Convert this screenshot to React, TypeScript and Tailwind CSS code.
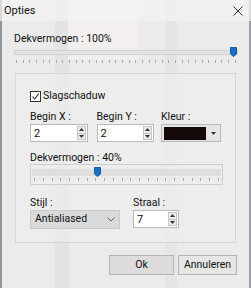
import React from "react";

function Spin() {
  return (
    <div className="flex flex-col w-[9px] h-[14px] border border-[#c4c4c4] bg-[#ececec]">
      <div className="flex-1 flex items-center justify-center border-b border-[#c4c4c4]">
        <svg width="5" height="3" viewBox="0 0 5 3" className="block"><path d="M0 3 L2.5 0 L5 3Z" fill="#333" /></svg>
      </div>
      <div className="flex-1 flex items-center justify-center">
        <svg width="5" height="3" viewBox="0 0 5 3" className="block"><path d="M0 0 L2.5 3 L5 0Z" fill="#333" /></svg>
      </div>
    </div>
  );
}

function NumInput({ value, w }: { value: string; w: string }) {
  return (
    <div className={`${w} h-[18px] flex items-center justify-between border border-[#b9b9b9] bg-white pl-[3px] pr-[1px]`}>
      <span className="text-[11px] leading-none text-[#111]">{value}</span>
      <Spin />
    </div>
  );
}

function Ticks({ n }: { n: number }) {
  return (
    <div className="flex justify-between px-[2px]">
      {Array.from({ length: n }).map((_, i) => (
        <div key={i} className="w-px h-[3px] bg-[#a8a8a8]" />
      ))}
    </div>
  );
}

function Thumb() {
  return (
    <svg width="7" height="10" viewBox="0 0 7 10" className="block">
      <path d="M0.5 0.5 H6.5 V7 L3.5 9.5 L0.5 7 Z" fill="#1e6fc8" stroke="#1a5aa6" strokeWidth="1" />
    </svg>
  );
}

const lbl = "text-[10.5px] leading-[14px] h-[14px]";

export default function App() {
  return (
    <div
      className="relative w-[251px] h-[288px] overflow-hidden bg-[#ebebeb] text-[#111]"
      style={{ fontFamily: 'Roboto, "Liberation Sans", Arial, sans-serif' }}
    >
      {/* faint background shapes showing through the translucent dialog */}
      <div className="absolute left-[55px] top-0 w-[14px] h-[288px] bg-[#e3e3e3]" />
      <div className="absolute left-[68px] top-0 w-[70px] h-[60px] bg-[#f3efef]" />
      <div className="absolute left-[165px] top-0 w-[12px] h-[288px] bg-[#e5e5e5]" />
      <div className="absolute left-[0px] top-0 w-[2px] h-[288px] bg-[#8f969c]" />
      <div className="absolute right-0 top-0 w-[2px] h-[288px] bg-[#9aa0a6]" />

      <div className="relative flex flex-col">
        {/* title bar */}
        <div className="h-[21px] flex items-center justify-between pl-[4px] pr-[8px] bg-[#f4f4f4]/70">
          <span className="text-[11px] leading-[14px]">Opties</span>
          <svg width="10" height="10" viewBox="0 0 10 10" className="block">
            <path d="M0.5 0.5 L9.5 9.5 M9.5 0.5 L0.5 9.5" stroke="#333" strokeWidth="1" />
          </svg>
        </div>

        <div className="pl-[14px] pr-[13px] mt-[11px]">
          <div className={lbl}>Dekvermogen : 100%</div>
          {/* slider */}
          <div className="mt-[1px] h-[17px] flex flex-col">
            <div className="relative h-[10px] flex items-center">
              <div className="w-full h-[5px] bg-[#e3e3e3] border border-[#d2d2d2]" />
              <div className="absolute right-[1px] top-[0px]">
                <Thumb />
              </div>
            </div>
            <div className="mt-[3px]">
              <Ticks n={34} />
            </div>
          </div>
        </div>

        {/* group box */}
        <div className="ml-[15px] mt-[9px] w-[221px] h-[170px] border border-[#d6d6d6] bg-[#f0efef]/60 pl-[14px] pr-[14px] flex flex-col">
          <div className="mt-[16px] h-[12px] flex items-center gap-[2px]">
            <div className="w-[11px] h-[11px] border border-[#333] bg-white flex items-center justify-center">
              <svg width="9" height="9" viewBox="0 0 9 9" className="block"><path d="M1.5 4.5 L3.7 7 L7.8 1.5" stroke="#222" strokeWidth="1.1" fill="none" /></svg>
            </div>
            <span className="text-[10.5px] leading-[14px]">Slagschaduw</span>
          </div>

          <div className="mt-[8px] flex">
            <div className="flex flex-col w-[67px]">
              <span className={lbl}>Begin X :</span>
              <NumInput value="2" w="w-[58px]" />
            </div>
            <div className="flex flex-col w-[65px]">
              <span className={lbl}>Begin Y :</span>
              <NumInput value="2" w="w-[57px]" />
            </div>
            <div className="flex flex-col">
              <span className={lbl}>Kleur :</span>
              <div className="w-[60px] h-[18px] flex items-center border border-[#b9b9b9] bg-[#e5e5e5] pl-[2px]">
                <div className="w-[42px] h-[13px] bg-[#140a0a]" />
                <div className="flex-1 flex justify-center">
                  <svg width="5" height="3" viewBox="0 0 5 3" className="block"><path d="M0 0 L2.5 3 L5 0Z" fill="#333" /></svg>
                </div>
              </div>
            </div>
          </div>

          <div className="mt-[10px] text-[10.5px] leading-[12px] h-[12px]">Dekvermogen : 40%</div>
          <div className="w-[193px] h-[21px] border border-[#cdcdcd] px-[1px] flex flex-col">
            <div className="relative h-[10px] mt-[2px] flex items-center">
              <div className="w-full h-[7px] bg-[#dedede]" />
              <div className="absolute left-[62px] top-0"><Thumb /></div>
            </div>
            <div className="mt-[1px]"><Ticks n={22} /></div>
          </div>

          <div className="mt-[11px] flex">
            <div className="flex flex-col w-[103px]">
              <span className={lbl}>Stijl :</span>
              <div className="w-[90px] h-[19px] flex items-center justify-between bg-[#dadada] border border-[#cacaca] pl-[4px] pr-[4px]">
                <span className="text-[10.5px] leading-none">Antialiased</span>
                <svg width="8" height="5" viewBox="0 0 8 5" className="block"><path d="M0.5 0.5 L4 4 L7.5 0.5" stroke="#666" fill="none" /></svg>
              </div>
            </div>
            <div className="flex flex-col">
              <span className={lbl}>Straal :</span>
              <NumInput value="7" w="w-[46px]" />
            </div>
          </div>
        </div>

        {/* buttons */}
        <div className="mt-[12px] flex justify-end gap-[4px] pr-[14px]">
          <button className="w-[65px] h-[20px] bg-[#dcdcdc] border border-[#b5b5b5] text-[10.5px] leading-none">Ok</button>
          <button className="w-[59px] h-[20px] bg-[#e6e6e6] border border-[#b5b5b5] text-[10.5px] leading-none">Annuleren</button>
        </div>
      </div>
    </div>
  );
}
